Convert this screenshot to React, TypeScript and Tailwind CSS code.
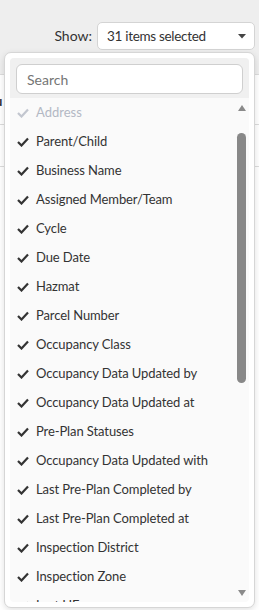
const items = [
  "Parent/Child",
  "Business Name",
  "Assigned Member/Team",
  "Cycle",
  "Due Date",
  "Hazmat",
  "Parcel Number",
  "Occupancy Class",
  "Occupancy Data Updated by",
  "Occupancy Data Updated at",
  "Pre-Plan Statuses",
  "Occupancy Data Updated with",
  "Last Pre-Plan Completed by",
  "Last Pre-Plan Completed at",
  "Inspection District",
  "Inspection Zone",
  "Last HF",
];

function Check({ color }: { color: string }) {
  return (
    <svg width="12" height="10" viewBox="0 0 12 10" className="shrink-0">
      <polyline points="1,5 4.5,8.5 11,1.5" fill="none" stroke={color} strokeWidth="2.2" />
    </svg>
  );
}

export default function App() {
  return (
    <div className="relative w-[259px] h-[610px] overflow-hidden bg-white font-['Lato',sans-serif] text-[#333]">
      <div className="h-[75px] bg-[#eeeeee] border-b border-[#dcdcdc] flex justify-end items-start pt-[22px] pr-[4px]">
        <span className="text-[14px] leading-[28px] mr-[5px]">Show:</span>
        <div className="w-[158px] h-[28px] bg-white border border-[#d4d4d4] rounded-[5px] flex items-center justify-between pl-[9px] pr-[8px]">
          <span className="text-[13.5px] tracking-[-0.3px]">31 items selected</span>
          <svg width="8" height="5" viewBox="0 0 8 5">
            <polygon points="0,0 8,0 4,4.5" fill="#444" />
          </svg>
        </div>
      </div>
      <div className="h-[50px] border-b border-[#dcdcdc] flex items-center pt-[4px]">
        <span className="text-[13px] font-bold -ml-[5px]">u</span>
      </div>
      <div className="h-[42px] border-b border-[#dcdcdc]" />

      <div className="absolute left-[4px] top-[52px] w-[251px] h-[556px] bg-white border border-[#d6d6d6] rounded-[7px] shadow-[0_2px_6px_rgba(0,0,0,0.12)] p-[5px]">
        <div className="h-full flex flex-col rounded-[4px] bg-[#fafafa] overflow-hidden">
          <div className="bg-[#f0f0f0] px-[6px] pt-[6px] pb-[4px]">
            <div className="h-[30px] bg-white border border-[#cfcfcf] rounded-[6px] flex items-center px-[10px] text-[14px] text-[#757575]">
              Search
            </div>
          </div>
          <div className="flex-1 flex min-h-0">
            <div className="flex-1 overflow-hidden">
              <div className="h-[29px] flex items-center pl-[7px] gap-[7px] text-[13px] text-[#b3b8c4]">
                <Check color="#c2c6cf" />
                <span>Address</span>
              </div>
              {items.map((t) => (
                <div key={t} className="h-[29px] flex items-center pl-[7px] gap-[7px] text-[13px] tracking-[-0.1px] text-[#333]">
                  <Check color="#333" />
                  <span className="whitespace-nowrap">{t}</span>
                </div>
              ))}
            </div>
            <div className="w-[9px] mr-[3px] flex flex-col items-center pt-[7px] pb-[6px]">
              <svg width="8" height="6" viewBox="0 0 8 6">
                <polygon points="0,6 8,6 4,0" fill="#8a8a8a" />
              </svg>
              <div className="flex-1 w-full pt-[22px]">
                <div className="w-[9px] h-[250px] rounded-full bg-[#888]" />
              </div>
              <svg width="8" height="6" viewBox="0 0 8 6">
                <polygon points="0,0 8,0 4,6" fill="#8a8a8a" />
              </svg>
            </div>
          </div>
        </div>
      </div>
    </div>
  );
}
